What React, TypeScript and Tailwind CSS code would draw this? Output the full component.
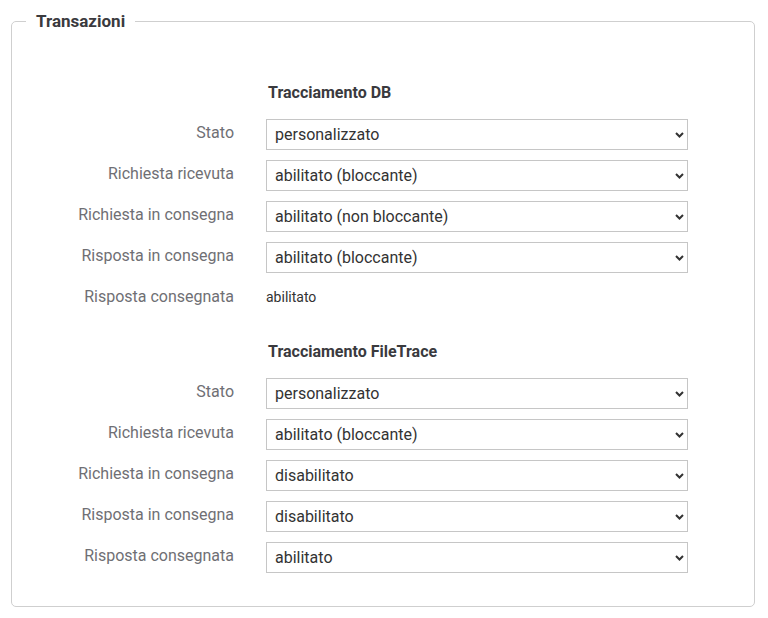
import React from "react";

type Row = { label: string; value: string; options: string[]; static?: boolean };

const opts = [
  "disabilitato",
  "abilitato",
  "abilitato (bloccante)",
  "abilitato (non bloccante)",
  "personalizzato",
];

const dbRows: Row[] = [
  { label: "Stato", value: "personalizzato", options: ["disabilitato", "abilitato", "personalizzato"] },
  { label: "Richiesta ricevuta", value: "abilitato (bloccante)", options: opts },
  { label: "Richiesta in consegna", value: "abilitato (non bloccante)", options: opts },
  { label: "Risposta in consegna", value: "abilitato (bloccante)", options: opts },
  { label: "Risposta consegnata", value: "abilitato", options: [], static: true },
];

const fileRows: Row[] = [
  { label: "Stato", value: "personalizzato", options: ["disabilitato", "abilitato", "personalizzato"] },
  { label: "Richiesta ricevuta", value: "abilitato (bloccante)", options: opts },
  { label: "Richiesta in consegna", value: "disabilitato", options: opts },
  { label: "Risposta in consegna", value: "disabilitato", options: opts },
  { label: "Risposta consegnata", value: "abilitato", options: ["disabilitato", "abilitato"] },
];

function Chevron() {
  return (
    <svg
      className="pointer-events-none absolute right-[4px] top-1/2 -translate-y-1/2"
      width="9"
      height="6"
      viewBox="0 0 9 6"
    >
      <path d="M1 1 L4.5 4.5 L8 1" fill="none" stroke="#333" strokeWidth="2" />
    </svg>
  );
}

function FormRow({ row }: { row: Row }) {
  return (
    <div className="flex items-start mb-[10px]">
      <div className="w-[222px] shrink-0 text-right pt-[4px] leading-5 text-[16px] text-[#6f6f74]">
        {row.label}
      </div>
      <div className="ml-[32px] w-[422px]">
        {row.static ? (
          <div className="h-[31px] pt-[4px] leading-5 text-[14px] text-[#333]">{row.value}</div>
        ) : (
          <div className="relative">
            <select
              defaultValue={row.value}
              className="appearance-none block w-full h-[31px] border border-[#c6c6c6] bg-white pl-[8px] pr-[20px] text-[16px] text-[#333] font-['Roboto',sans-serif] leading-5"
            >
              {row.options.map((o) => (
                <option key={o} value={o}>
                  {o}
                </option>
              ))}
            </select>
            <Chevron />
          </div>
        )}
      </div>
    </div>
  );
}

function Section({ title, rows, className }: { title: string; rows: Row[]; className?: string }) {
  return (
    <div className={className}>
      <div className="ml-[256px] mb-[16px] leading-5 text-[16px] font-bold text-[#3a3a3e]">{title}</div>
      {rows.map((r, i) => (
        <FormRow key={i} row={r} />
      ))}
    </div>
  );
}

export default function App() {
  return (
    <div className="w-[768px] h-[618px] bg-white font-['Roboto',sans-serif] pt-[11px] pl-[11px]">
      <fieldset className="w-[744px] border border-[#cfcfcf] rounded-[5px] pt-[52px] pb-[23px] px-0">
        <legend className="ml-[14px] px-[10px] leading-5 text-[17px] font-bold text-[#3a3a3e]">
          Transazioni
        </legend>
        <Section title="Tracciamento DB" rows={dbRows} />
        <Section title="Tracciamento FileTrace" rows={fileRows} className="mt-[28px]" />
      </fieldset>
    </div>
  );
}
